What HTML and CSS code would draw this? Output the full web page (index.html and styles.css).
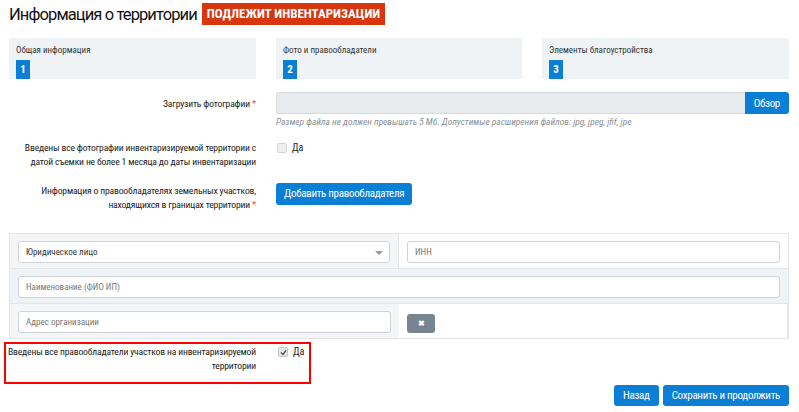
FILE: index.html
```html
<!DOCTYPE html>
<html lang="ru">
<head>
  <meta charset="UTF-8">
  <title>Информация о территории</title>
  <link rel="stylesheet" href="styles.css">
</head>
<body>
  <div class="page">
    <div class="head">
      <h1>Информация о территории</h1>
      <span class="badge">ПОДЛЕЖИТ ИНВЕНТАРИЗАЦИИ</span>
    </div>

    <div class="steps">
      <div class="step">
        <div class="step-title">Общая информация</div>
        <span class="step-num">1</span>
      </div>
      <div class="step">
        <div class="step-title">Фото и правообладатели</div>
        <span class="step-num">2</span>
      </div>
      <div class="step">
        <div class="step-title">Элементы благоустройства</div>
        <span class="step-num">3</span>
      </div>
    </div>

    <div class="row row-upload">
      <label class="lbl">Загрузить фотографии <span class="req">*</span></label>
      <div class="ctrl">
        <div class="file">
          <div class="file-input"></div>
          <button class="btn btn-file">Обзор</button>
        </div>
        <div class="hint">Размер файла не должен превышать 5 Мб. Допустимые расширения файлов: jpg, jpeg, jfif, jpe</div>
      </div>
    </div>

    <div class="row row-photos">
      <label class="lbl">Введены все фотографии инвентаризируемой территории с датой съемки не более 1 месяца до даты инвентаризации</label>
      <div class="ctrl check">
        <span class="box"></span>
        <span>Да</span>
      </div>
    </div>

    <div class="row row-owners">
      <label class="lbl">Информация о правообладателях земельных участков, находящихся в границах территории <span class="req">*</span></label>
      <div class="ctrl">
        <button class="btn btn-add">Добавить правообладателя</button>
      </div>
    </div>

    <div class="owner">
      <div class="cell gray">
        <div class="field select">Юридическое лицо<span class="caret"></span></div>
      </div>
      <div class="cell">
        <div class="field ph">ИНН</div>
      </div>
      <div class="cell gray wide">
        <div class="field ph">Наименование (ФИО ИП)</div>
      </div>
      <div class="cell gray">
        <div class="field ph">Адрес организации</div>
      </div>
      <div class="cell">
        <button class="btn-del">&#10006;</button>
      </div>
    </div>

    <div class="marked">
      <div class="row row-done">
        <label class="lbl">Введены все правообладатели участков на инвентаризируемой территории</label>
        <div class="ctrl check">
          <span class="box checked">
            <svg width="7" height="7" viewBox="0 0 7 7"><path d="M1 3.5 L3 5.5 L6.2 1.2" fill="none" stroke="#555" stroke-width="1.4"/></svg>
          </span>
          <span>Да</span>
        </div>
      </div>
    </div>

    <div class="actions">
      <button class="btn">Назад</button>
      <button class="btn">Сохранить и продолжить</button>
    </div>
  </div>
</body>
</html>
```

FILE: styles.css
```css
body {
  margin: 0;
  font-family: "Liberation Sans Narrow", "Roboto Condensed", Roboto, sans-serif;
  color: #222;
  background: #fff;
}

.page {
  width: 780px;
  padding: 3px 0 0 9px;
}

.head {
  display: flex;
  align-items: center;
  gap: 5px;
  height: 22px;
}

.head h1 {
  margin: 0;
  font-family: Roboto, sans-serif;
  font-weight: 400;
  font-size: 16.5px;
  letter-spacing: -0.9px;
  color: #111;
}

.badge {
  background: #d8360f;
  color: #fff;
  font-weight: bold;
  font-size: 13px;
  padding: 4px 5px;
  line-height: 14px;
}

.steps {
  display: grid;
  grid-template-columns: 247px 246px 247px;
  column-gap: 20px;
  margin-top: 13px;
}

.step {
  background: #f0f3f6;
  height: 41px;
  padding: 0 7px;
  display: flex;
  flex-direction: column;
  justify-content: flex-end;
}

.step-title {
  font-size: 9px;
  color: #333;
  margin-bottom: 5px;
}

.step-num {
  display: inline-block;
  width: 14px;
  height: 19px;
  background: #0b7ed6;
  color: #fff;
  font-weight: bold;
  font-size: 11px;
  line-height: 20px;
  text-align: center;
}

.row {
  display: grid;
  grid-template-columns: 247px 1fr;
  column-gap: 20px;
}

.lbl {
  text-align: right;
  font-size: 9.6px;
  letter-spacing: -0.15px;
  line-height: 13.5px;
  color: #222;
}

.req { color: #d9534f; }

.row-upload { margin-top: 13px; }
.row-upload .lbl { padding-top: 5px; }

.file {
  display: flex;
  height: 22px;
}

.file-input {
  flex: 1;
  background: #e8ebee;
  border: 1px solid #d6dadd;
  border-right: none;
  border-radius: 3px 0 0 3px;
}

.btn {
  background: #0b7ed6;
  color: #fff;
  border: none;
  border-radius: 3px;
  font-family: inherit;
  font-size: 11px;
  letter-spacing: -0.3px;
  height: 21px;
  padding: 0 9px;
  cursor: pointer;
}

.btn-file {
  height: 22px;
  border-radius: 0 3px 3px 0;
  padding: 0 9px;
}

.hint {
  font-size: 9.4px;
  font-style: italic;
  color: #8a8f94;
  margin-top: 2px;
}

.row-photos { margin-top: 14px; }

.check {
  display: flex;
  align-items: flex-start;
  gap: 5px;
  font-size: 10px;
  padding-top: 1px;
  padding-left: 1px;
}

.box {
  width: 8px;
  height: 8px;
  border: 1px solid #d3d6d9;
  border-radius: 2px;
  background: #eef0f2;
  display: flex;
  align-items: center;
  justify-content: center;
  margin-top: 1px;
}

.box.checked { background: #e3e5e8; border-color: #c8cbce; }

.row-owners { margin-top: 14px; }
.row-owners .lbl { padding-top: 2px; }

.btn-add { height: 22px; padding: 0 8px; }

.owner {
  display: grid;
  grid-template-columns: 389px 1fr;
  border: 1px solid #e2e6e9;
  margin-top: 22px;
}

.cell {
  padding: 7px 8px 5px;
  border-bottom: 1px solid #e2e6e9;
}

.cell:nth-child(odd):not(.wide) { border-right: 1px solid #e2e6e9; }
.cell:last-child, .cell:nth-last-child(2) { border-bottom: none; }

.cell.gray { background: #f3f5f7; }
.cell.wide { grid-column: 1 / 3; background: #f0f3f6; }

.field {
  height: 20px;
  border: 1px solid #cfd3d7;
  border-radius: 3px;
  background: #fff;
  font-size: 9px;
  line-height: 20px;
  padding: 0 7px;
  color: #333;
  position: relative;
}

.field.ph { color: #777; }

.caret {
  position: absolute;
  right: 6px;
  top: 9px;
  border-left: 4px solid transparent;
  border-right: 4px solid transparent;
  border-top: 4px solid #999;
}

.btn-del {
  margin-top: 2px;
  width: 28px;
  height: 19px;
  border: none;
  border-radius: 3px;
  background: #778591;
  color: #fff;
  font-size: 8px;
  font-weight: bold;
}

.marked {
  box-sizing: border-box;
  border: 2px solid #f00;
  width: 307px;
  height: 42px;
  margin: 3px 0 0 -5px;
  padding: 1px 0 0 0;
}

.marked .row {
  grid-template-columns: 250px 1fr;
  column-gap: 21px;
}

.actions {
  display: flex;
  justify-content: flex-end;
  gap: 4px;
  margin-top: 1px;
}

.actions .btn { height: 21px; padding: 0 9px; }
```
